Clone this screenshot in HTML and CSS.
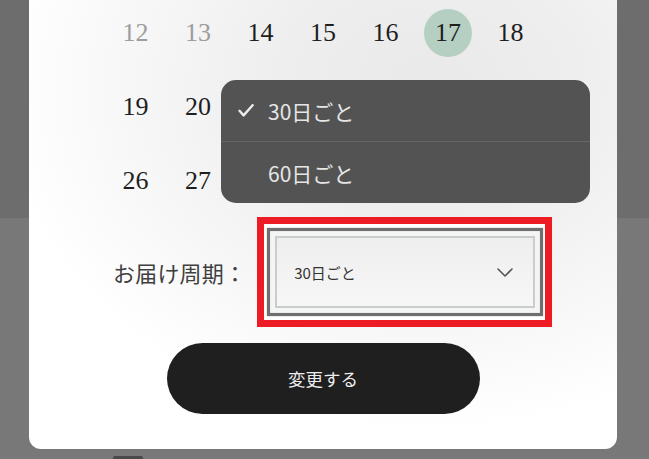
FILE: index.html
```html
<!DOCTYPE html>
<html lang="ja">
<head>
<meta charset="utf-8">
<title>お届け周期</title>
<link rel="stylesheet" href="styles.css">
</head>
<body>
<div class="page">
  <div class="modal">
    <div class="calendar">
      <span class="day muted">12</span>
      <span class="day muted">13</span>
      <span class="day">14</span>
      <span class="day">15</span>
      <span class="day">16</span>
      <span class="day"><span class="selected">17</span></span>
      <span class="day">18</span>
      <span class="day">19</span>
      <span class="day">20</span>
      <span class="day covered">21</span>
      <span class="day covered">22</span>
      <span class="day covered">23</span>
      <span class="day covered">24</span>
      <span class="day covered">25</span>
      <span class="day">26</span>
      <span class="day">27</span>
      <span class="day covered">28</span>
      <span class="day covered">29</span>
      <span class="day covered">30</span>
      <span class="day covered">31</span>
      <span class="day"></span>
    </div>

    <div class="menu">
      <div class="menu-item">
        <svg class="check" width="16" height="13" viewBox="0 0 16 13"><path d="M1.5 6.8 L5.6 11.4 L14.6 1.2" fill="none" stroke="#ececec" stroke-width="2.4" stroke-linecap="round" stroke-linejoin="round"/></svg>
        <span>30日ごと</span>
      </div>
      <div class="menu-item">
        <span class="check-space"></span>
        <span>60日ごと</span>
      </div>
    </div>

    <div class="form-row">
      <span class="label">お届け周期：</span>
      <div class="highlight">
        <div class="select">
          <div class="select-inner">
            <span>30日ごと</span>
            <svg width="16" height="9" viewBox="0 0 16 9"><path d="M1 1 L8 8 L15 1" fill="none" stroke="#555" stroke-width="1.6" stroke-linecap="round" stroke-linejoin="round"/></svg>
          </div>
        </div>
      </div>
    </div>

    <button class="submit" type="button">変更する</button>
  </div>
  <div class="peek"></div>
</div>
</body>
</html>
```

FILE: styles.css
```css
html, body {
  margin: 0;
  padding: 0;
}

body {
  width: 649px;
  height: 459px;
  overflow: hidden;
  background: linear-gradient(#6d6d6d 0, #6d6d6d 218px, #787878 218px, #787878 100%);
  font-family: "Noto Sans CJK JP", "Noto Sans", sans-serif;
}

.page {
  display: flex;
  flex-direction: column;
}

.modal {
  position: relative;
  width: 588px;
  margin: -60px 0 0 29px;
  padding: 56px 0 35px;
  box-sizing: border-box;
  border-radius: 12px;
  background: radial-gradient(ellipse 430px 340px at 400px 150px, #e9e9e9 0%, #eeeeee 35%, #f7f7f7 70%, #ffffff 100%);
  display: flex;
  flex-direction: column;
}

.calendar {
  display: grid;
  grid-template-columns: repeat(7, 62.5px);
  grid-auto-rows: 74px;
  justify-content: center;
}

.day {
  display: flex;
  align-items: center;
  justify-content: center;
  font-family: "Liberation Serif", serif;
  font-size: 26px;
  color: #1e1e1e;
}

.day.muted {
  color: #9d9d9d;
}

.day.covered {
  visibility: hidden;
}

.selected {
  width: 48px;
  height: 48px;
  border-radius: 50%;
  background: #b5d0c2;
  display: flex;
  align-items: center;
  justify-content: center;
}

.menu {
  position: absolute;
  left: 192px;
  top: 140px;
  width: 369px;
  height: 123px;
  border-radius: 15px;
  background: #535353;
  display: flex;
  flex-direction: column;
  overflow: hidden;
}

.menu-item {
  flex: 1;
  display: flex;
  align-items: center;
  gap: 14px;
  padding-left: 17px;
  color: #e6e6e6;
  font-size: 21px;
}

.menu-item + .menu-item {
  border-top: 1px solid #666666;
}

.check, .check-space {
  width: 16px;
  flex: none;
}

.form-row {
  display: flex;
  align-items: center;
  margin-top: -1px;
  padding-left: 84px;
}

.label {
  font-size: 22px;
  color: #404040;
  margin-right: 11px;
  letter-spacing: 0.2px;
}

.highlight {
  border: 7px solid #ed1c24;
  padding: 4px 2px 4px 3px;
  background: #ffffff;
}

.select {
  width: 276px;
  height: 88px;
  box-sizing: border-box;
  border: 3px solid #6f6f6f;
  box-shadow: 0 0 1px #8a8a8a, inset 0 0 1px #8a8a8a;
  padding: 5px;
  background: #f5f5f5;
}

.select-inner {
  height: 100%;
  box-sizing: border-box;
  border: 2px solid #c7cecb;
  display: flex;
  align-items: center;
  justify-content: space-between;
  padding: 0 20px 0 17px;
  background: linear-gradient(#eeeeee, #f7f7f7);
  font-size: 15px;
  color: #333333;
}

.submit {
  display: block;
  width: 313px;
  height: 71px;
  margin: 16px auto 0;
  border: none;
  border-radius: 36px;
  background: #1f1f1f;
  color: #eeeeee;
  font-family: "Noto Sans CJK JP", "Noto Sans", sans-serif;
  font-size: 17.5px;
  padding: 0;
}

.peek {
  width: 30px;
  height: 3px;
  margin: 7px 0 0 113px;
  background: #4a4a4a;
  border-radius: 2px 2px 0 0;
}
```
